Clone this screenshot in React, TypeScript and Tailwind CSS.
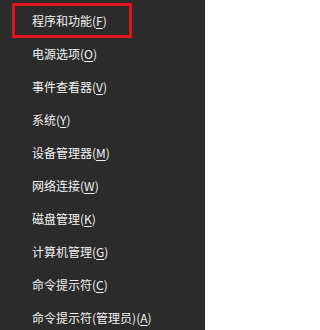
const items: { label: string; key: string; tail?: string }[] = [
  { label: "程序和功能", key: "F" },
  { label: "电源选项", key: "O" },
  { label: "事件查看器", key: "V" },
  { label: "系统", key: "Y" },
  { label: "设备管理器", key: "M" },
  { label: "网络连接", key: "W" },
  { label: "磁盘管理", key: "K" },
  { label: "计算机管理", key: "G" },
  { label: "命令提示符", key: "C" },
  { label: "命令提示符(管理员)", key: "A" },
];

export default function App() {
  return (
    <div
      className="flex h-[330px] w-[205px] flex-col overflow-hidden bg-[#2b2b2b] pt-[4px] text-[12px] text-[#f2f2f2]"
      style={{ fontFamily: '"Noto Sans CJK SC", "Noto Sans", sans-serif' }}
    >
      {items.map((item, i) => (
        <div key={item.key} className="flex h-[33px] shrink-0 items-center pl-[12px]">
          <div
            className={
              i === 0
                ? "flex h-[35px] w-[120px] items-center border-[3px] border-[#e0141e] pl-[17px]"
                : "flex h-[35px] w-[120px] items-center border-[3px] border-transparent pl-[17px]"
            }
          >
            <span className="whitespace-nowrap leading-none">
              {item.label}(<span className="underline underline-offset-2">{item.key}</span>)
            </span>
          </div>
        </div>
      ))}
    </div>
  );
}
